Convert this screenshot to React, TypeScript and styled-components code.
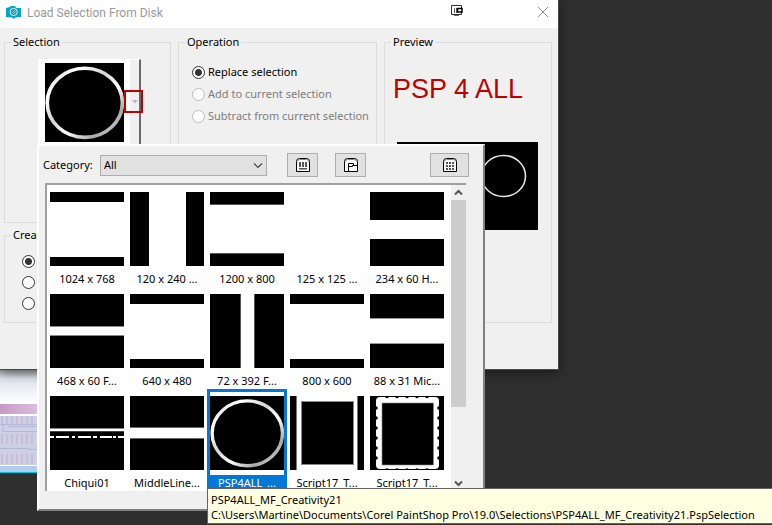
import React from "react";
import styled, { createGlobalStyle } from "styled-components";

const GlobalStyle = createGlobalStyle`
  *, *::before, *::after { box-sizing: border-box; }
  body { margin: 0; background: #2f2f2f; }
  button, select, input, fieldset, legend { font: inherit; margin: 0; }
`;

const titleFont = `Roboto, "Open Sans", sans-serif`;
const uiFont = `"Noto Sans", "Open Sans", sans-serif`;

const Desktop = styled.main`
  position: relative;
  min-height: 100vh;
  overflow: hidden;
  background: #2f2f2f;
  color: #000;
  font: 11px/16px ${uiFont};
`;

const Dialog = styled.section`
  position: relative;
  width: calc(100% - 214px);
  min-width: 520px;
  background: #f0f0f0;
  box-shadow: 0 0 0 1px #484848, 0 3px 12px rgba(0, 0, 0, 0.55);
`;

const TitleBar = styled.header`
  display: flex;
  align-items: center;
  gap: 6px;
  height: 28px;
  padding: 0 9px 4px 6px;
  background: #fff;
`;

const Title = styled.h1`
  flex: 1;
  margin: 0;
  padding-top: 2px;
  color: #999;
  font: 400 12px/16px ${titleFont};
`;

const TitleTool = styled.span`
  display: flex;
  margin: 0 68px 3px 0;
`;

const CloseButton = styled.button`
  display: flex;
  padding: 0;
  border: 0;
  background: none;
`;

const DialogBody = styled.form`
  display: grid;
  grid-template-columns: 167fr 199fr 168fr;
  grid-template-rows: 189px 96px;
  column-gap: 7px;
  row-gap: 4px;
  padding: 6px 6px 46px 4px;
`;

const Group = styled.fieldset<{ $area: string }>`
  grid-area: ${(p) => p.$area};
  min-width: 0;
  padding: 0 13px 0 6px;
  border: 1px solid #dcdcdc;
`;

const GroupTitle = styled.legend`
  padding: 0 2px;
`;

const RadioList = styled.div<{ $inset: number; $gap: number; $top: number }>`
  display: flex;
  flex-direction: column;
  gap: ${(p) => p.$gap}px;
  padding: ${(p) => p.$top}px 0 0 ${(p) => p.$inset}px;
`;

const RadioLabel = styled.label<{ $dim?: boolean }>`
  display: flex;
  align-items: center;
  gap: 3px;
  min-height: 16px;
  white-space: nowrap;
  color: ${(p) => (p.$dim ? "#7d7d7d" : "#000")};
`;

const Radio = styled.input`
  appearance: none;
  flex: none;
  width: 13px;
  height: 13px;
  border: 1px solid #333;
  border-radius: 50%;
  background: #fff;
  &:checked { background: radial-gradient(circle, #333 0 3px, #fff 4px); }
  &:disabled { border-color: #bcbcbc; }
`;

const PickerButton = styled.button`
  display: flex;
  align-items: stretch;
  width: 103px;
  height: 96px;
  margin: 9px 0 0 27px;
  padding: 0;
  border: 1px solid #fff;
  border-right: 2px solid #696969;
  border-bottom: 2px solid #696969;
  background: #f0f0f0;
`;

const PickerImage = styled.span`
  display: flex;
  flex: 1;
  padding: 3px 5px 0 6px;
  background: #fff;
`;

const PickerArrow = styled.span`
  display: flex;
  flex: none;
  align-items: center;
  justify-content: center;
  width: 19px;
  height: 23px;
  margin: 30px -4px 0 -6px;
  padding-left: 2px;
  border: 2px solid #c00000;
  z-index: 1;
`;

const Watermark = styled.p`
  margin: 23px 0 0 2px;
  color: #c00000;
  font: 27px/32px "Liberation Sans", Arial, sans-serif;
  white-space: nowrap;
`;

const PreviewImage = styled.svg`
  display: block;
  width: calc(100% - 6px);
  margin: 37px 0 0 6px;
`;

const Strip = styled.svg`
  display: block;
  width: 38px;
  height: 104px;
`;

const Popup = styled.section`
  position: absolute;
  left: 37px;
  top: 144px;
  width: max-content;
  padding: 7px 17px 18px 6px;
  border: 2px solid;
  border-color: #fff #808080 #808080 #fff;
  background: #f0f0f0;
`;

const Toolbar = styled.div`
  display: flex;
  align-items: center;
  margin: 0 -3px 6px -2px;
`;

const CategoryLabel = styled.label`
  flex: none;
  width: 57px;
`;

const CategoryField = styled.span`
  position: relative;
  display: flex;
  flex: 1;
  margin-right: 20px;
`;

const CategorySelect = styled.select`
  appearance: none;
  width: 100%;
  height: 21px;
  padding: 0 3px;
  border: 1px solid #adadad;
  border-radius: 0;
  background: #e1e1e1;
  color: #000;
`;

const SelectChevron = styled.svg`
  position: absolute;
  right: 4px;
  top: 7px;
  pointer-events: none;
`;

const ToolButton = styled.button<{ $width?: number; $after?: number }>`
  display: flex;
  align-items: center;
  justify-content: center;
  width: ${(p) => p.$width ?? 31}px;
  height: 24px;
  margin-right: ${(p) => p.$after ?? 0}px;
  padding: 0;
  border: 1px solid #adadad;
  background: #e1e1e1;
`;

const ListFrame = styled.div`
  display: flex;
  border: solid #a0a0a0;
  border-width: 2px 0 0 2px;
`;

const ThumbGrid = styled.div`
  display: grid;
  grid-template-columns: repeat(5, 80px);
  padding-right: 4px;
  background: #fff;
`;

const Cell = styled.button<{ $selected?: boolean }>`
  display: flex;
  flex-direction: column;
  padding: 3px 3px 0;
  border: 0;
  background: ${(p) => (p.$selected ? "#0078d7" : "#fff")};
  color: ${(p) => (p.$selected ? "#fff" : "#000")};
`;

const ThumbFrame = styled.span`
  display: flex;
  padding: 4px 0 5px;
  background: #fff;
`;

const Caption = styled.span`
  align-self: center;
  line-height: 16px;
  white-space: nowrap;
`;

const ScrollBar = styled.div`
  display: flex;
  flex-direction: column;
  width: 15px;
  background: #f0f0f0;
`;

const ScrollButton = styled.button`
  display: flex;
  align-items: center;
  justify-content: center;
  height: 15px;
  padding: 0;
  border: 0;
  background: none;
`;

const ScrollTrack = styled.div`
  flex: 1;
`;

const ScrollThumb = styled.div`
  height: 75%;
  background: #cdcdcd;
`;

const Tooltip = styled.div`
  position: absolute;
  left: 207px;
  right: 0;
  top: 488px;
  padding: 3px 3px 1px;
  border: 1px solid #646464;
  border-right: 0;
  background: #ffffe1;
  line-height: 15px;
  white-space: nowrap;
`;

type Bar = [x: number, y: number, w: number, h: number, fill?: string];

const Bars = ({ bars }: { bars: Bar[] }) => (
  <>
    {bars.map(([x, y, w, h, fill = "#000"], i) => (
      <rect key={i} x={x} y={y} width={w} height={h} fill={fill} />
    ))}
  </>
);

const Ring = ({ size }: { size: number }) => (
  <svg width={size} height={size} viewBox="0 0 74 74" aria-hidden="true">
    <defs>
      <linearGradient id={`ring${size}`} x1="0" y1="0" x2="1" y2="1">
        <stop offset="0" stopColor="#bbb" />
        <stop offset="0.2" stopColor="#fff" />
        <stop offset="0.42" stopColor="#d4d4d4" />
        <stop offset="0.6" stopColor="#fff" />
        <stop offset="0.8" stopColor="#aaa" />
        <stop offset="1" stopColor="#ddd" />
      </linearGradient>
    </defs>
    <rect width="74" height="74" />
    <ellipse cx="37.3" cy="37.3" rx="35.2" ry="32.4" fill="none" stroke={`url(#ring${size})`} strokeWidth="3.4" />
  </svg>
);

const dashes: Bar[] = [[0, 4], [6, 13], [22, 3], [28, 13], [43, 4], [50, 12], [63, 3], [68, 6]].map(
  ([x, w]): Bar => [x, 40, w, 2, "#fff"]
);

const horizontal = (top: number, bottom: number, edge: string): Bar[] => [
  [0, 0, 74, top],
  [0, top, 74, 1, edge],
  [0, bottom - 1, 74, 1, edge],
  [0, bottom, 74, 74 - bottom],
];

const Stamp = () => (
  <>
    <rect width="74" height="74" />
    <rect x="6" y="1" width="63" height="72" rx="4" fill="#fff" />
    {[17, 27, 37, 47, 57].map((t) => (
      <React.Fragment key={t}>
        <circle cx={t} cy="0.5" r="1.8" />
        <circle cx={t} cy="74" r="1.8" />
      </React.Fragment>
    ))}
    {[12, 22, 32, 42, 52, 62].map((t) => (
      <React.Fragment key={t}>
        <circle cx="6" cy={t} r="1.8" />
        <circle cx="69" cy={t} r="1.8" />
      </React.Fragment>
    ))}
    <rect x="12" y="7" width="51.5" height="62" stroke="#888" strokeWidth="0.6" />
  </>
);

const items: { name: string; bars?: Bar[]; art?: "ring" | "stamp" }[] = [
  { name: "1024 x 768", bars: [[0, 0, 74, 10], [0, 65, 74, 9]] },
  { name: "120 x 240 ...", bars: [[0, 0, 19, 74], [56, 0, 18, 74]] },
  { name: "1200 x 800", bars: horizontal(12, 62, "#555") },
  { name: "125 x 125 ...", bars: [] },
  { name: "234 x 60 H...", bars: [[0, 0, 74, 28], [0, 47, 74, 27]] },
  { name: "468 x 60 F...", bars: horizontal(32, 42, "#888") },
  { name: "640 x 480", bars: [[0, 0, 74, 10], [0, 65, 74, 9]] },
  { name: "72 x 392 F...", bars: [[0, 0, 30, 74], [30, 0, 1, 74, "#555"], [44, 0, 1, 74, "#555"], [45, 0, 29, 74]] },
  { name: "800 x 600", bars: [[0, 0, 74, 10], [0, 65, 74, 9]] },
  { name: "88 x 31 Mic...", bars: horizontal(24, 50, "#999") },
  { name: "Chiqui01", bars: [[0, 0, 74, 32], [0, 32, 74, 1, "#888"], [0, 35, 74, 39], [0, 35, 74, 1, "#444"], ...dashes] },
  { name: "MiddleLine...", bars: horizontal(31, 43, "#666") },
  { name: "PSP4ALL_...", art: "ring" },
  {
    name: "Script17_T...",
    bars: [[0, 0, 6, 74], [6, 0, 1, 74, "#777"], [67, 0, 1, 74, "#777"], [68, 0, 6, 74], [11, 5, 53, 64, "#888"], [12, 6, 51, 62]],
  },
  { name: "Script17_T...", art: "stamp" },
];

const ToolIcon = ({ kind }: { kind: "delete" | "save" | "grid" }) => (
  <svg width="14" height="14" viewBox="0 0 14 14" fill="none" aria-hidden="true">
    <path d="M0.5 13.5V3.5Q0.5 0.5 3.5 0.5H10.5Q13.5 0.5 13.5 3.5V13.5Z" fill="#f8f8f8" stroke="#000" />
    <path d="M1.5 3.5Q1.5 1.5 3.5 1.5H10.5Q12.5 1.5 12.5 3.5" stroke="#888" />
    {kind === "delete" && <path d="M4 4V9M7 4V9M10 4V9M3 10.5H11" stroke="#555" strokeWidth="2" />}
    {kind === "delete" && <path d="M3 9.5H11" stroke="#f8f8f8" />}
    {kind === "save" && <path d="M4.5 13V5.5H9.5V7.5H13M4.5 8.5H8.5V7.5H10" stroke="#000" />}
    {kind === "grid" && (
      <path
        d="M3 5H5M6 5H8M9 5H11M3 8H5M6 8H8M9 8H11M3 11H5M6 11H8M9 11H11"
        stroke="#555"
        strokeWidth="2"
      />
    )}
  </svg>
);

const ScrollChevron = ({ down }: { down?: boolean }) => (
  <svg width="9" height="7" viewBox="0 0 9 7" fill="none" aria-hidden="true">
    <path d={down ? "M1 1.5L4.5 5L8 1.5" : "M1 5.5L4.5 2L8 5.5"} stroke="#555" strokeWidth="2" />
  </svg>
);

export default function App() {
  return (
    <Desktop>
      <GlobalStyle />
      <Dialog aria-labelledby="dialog-title">
        <TitleBar>
          <svg width="15" height="13" viewBox="0 0 15 13" aria-hidden="true">
            <path d="M0 2L4 1L5 0H9L10 2H15V11H10L8 13L6 11.5L0 11Z" fill="#00a6c4" />
            <circle cx="7.7" cy="6" r="3.6" fill="#2391aa" stroke="#d8f2f6" strokeWidth="1" />
            <path d="M6 7L9 4M7 8L10 5.5" stroke="#8fd4e0" />
          </svg>
          <Title id="dialog-title">Load Selection From Disk</Title>
          <TitleTool>
            <svg width="12" height="12" viewBox="0 0 12 12" fill="none" aria-hidden="true">
              <path d="M0.5 0.5H10.5V9.5H0.5Z" stroke="#333" />
              <path d="M3.5 3V8M5.5 3V8M3 10.5H8" stroke="#666" />
              <path d="M6.5 3.5H11V7H6.5Z" fill="#fff" stroke="#000" strokeWidth="1.5" />
            </svg>
          </TitleTool>
          <CloseButton type="button" aria-label="Close">
            <svg width="12" height="12" viewBox="0 0 12 12" aria-hidden="true">
              <path d="M1 1L11 11M11 1L1 11" stroke="#888" />
            </svg>
          </CloseButton>
        </TitleBar>
        <DialogBody>
          <Group $area="1 / 1">
            <GroupTitle>Selection</GroupTitle>
            <PickerButton type="button" aria-label="Choose selection">
              <PickerImage>
                <Ring size={79} />
              </PickerImage>
              <PickerArrow>
                <svg width="6" height="4" viewBox="0 0 6 4" aria-hidden="true">
                  <path d="M0 0H6L3 3.5Z" fill="#bbb" />
                </svg>
              </PickerArrow>
            </PickerButton>
          </Group>
          <Group $area="1 / 2 / 3 / 3">
            <GroupTitle>Operation</GroupTitle>
            <RadioList $inset={7} $gap={6} $top={14}>
              <RadioLabel>
                <Radio type="radio" name="operation" defaultChecked /> Replace selection
              </RadioLabel>
              <RadioLabel $dim>
                <Radio type="radio" name="operation" disabled /> Add to current selection
              </RadioLabel>
              <RadioLabel $dim>
                <Radio type="radio" name="operation" disabled /> Subtract from current selection
              </RadioLabel>
            </RadioList>
          </Group>
          <Group $area="2 / 1">
            <GroupTitle>Create</GroupTitle>
            <RadioList $inset={11} $gap={5} $top={10}>
              {["First source", "Second source", "Third source"].map((name, i) => (
                <RadioLabel key={name}>
                  <Radio type="radio" name="source" aria-label={name} defaultChecked={i === 0} />
                </RadioLabel>
              ))}
            </RadioList>
          </Group>
          <Group $area="1 / 3 / 3 / 4">
            <GroupTitle>Preview</GroupTitle>
            <Watermark>PSP 4 ALL</Watermark>
            <PreviewImage viewBox="0 0 141 88" role="img" aria-label="Selection preview">
              <rect width="141" height="88" />
              <ellipse cx="106.5" cy="34" rx="22" ry="20.5" fill="none" stroke="#e4e4e4" strokeWidth="1.6" />
            </PreviewImage>
          </Group>
        </DialogBody>
      </Dialog>

      <Strip viewBox="0 0 38 104" aria-hidden="true">
        <defs>
          <linearGradient id="sky" x1="0" y1="0" x2="0" y2="1">
            <stop offset="0" stopColor="#a2a5a9" />
            <stop offset="0.3" stopColor="#dfe6ee" />
            <stop offset="1" stopColor="#fafcfe" />
          </linearGradient>
          <linearGradient id="rose">
            <stop offset="0" stopColor="#c69ac6" />
            <stop offset="1" stopColor="#dcbfdc" />
          </linearGradient>
        </defs>
        <rect width="38" height="104" fill="#fff" />
        <rect width="38" height="32" fill="url(#sky)" />
        <rect y="35" width="38" height="10" fill="url(#rose)" />
        <rect y="47" width="38" height="49" fill="#cbd0e6" />
        <path
          d="M2 47V55M7 47V55M12 47V55M17 47V55M22 47V55M27 47V55M32 47V55M2 65V75M7 65V75M12 65V75M17 65V75M22 65V75M27 65V75M32 65V75M2 85V95M7 85V95M12 85V95M17 85V95M22 85V95M27 85V95M32 85V95"
          stroke="#cba9c6"
        />
        <path d="M0 55.5H38M8 57.5H38M3 56V62.5H38M0 79.5H28L30 80.5H38" stroke="#b2b9d6" fill="none" />
        <rect y="97" width="38" height="6" fill="#b4cdea" />
        <rect y="103" width="38" height="1" fill="#00c5dd" />
      </Strip>

      <Popup aria-label="Selections">
        <Toolbar>
          <CategoryLabel htmlFor="category">Category:</CategoryLabel>
          <CategoryField>
            <CategorySelect id="category" defaultValue="All">
              <option>All</option>
            </CategorySelect>
            <SelectChevron width="10" height="7" viewBox="0 0 10 7" fill="none" aria-hidden="true">
              <path d="M1 1.5L5 5.5L9 1.5" stroke="#444" strokeWidth="1.2" />
            </SelectChevron>
          </CategoryField>
          <ToolButton type="button" aria-label="Delete" $after={17}>
            <ToolIcon kind="delete" />
          </ToolButton>
          <ToolButton type="button" aria-label="File locations" $after={64}>
            <ToolIcon kind="save" />
          </ToolButton>
          <ToolButton type="button" aria-label="Resource manager" $width={39}>
            <ToolIcon kind="grid" />
          </ToolButton>
        </Toolbar>
        <ListFrame>
          <ThumbGrid>
            {items.map(({ name, bars, art }, i) => (
              <Cell key={i} type="button" $selected={art === "ring"} aria-pressed={art === "ring"}>
                <ThumbFrame>
                  {art === "ring" ? (
                    <Ring size={74} />
                  ) : (
                    <svg width="74" height="74" viewBox="0 0 74 74" aria-hidden="true">
                      {art === "stamp" ? <Stamp /> : <Bars bars={bars ?? []} />}
                    </svg>
                  )}
                </ThumbFrame>
                <Caption>{name}</Caption>
              </Cell>
            ))}
          </ThumbGrid>
          <ScrollBar>
            <ScrollButton type="button" aria-label="Scroll up">
              <ScrollChevron />
            </ScrollButton>
            <ScrollTrack>
              <ScrollThumb />
            </ScrollTrack>
            <ScrollButton type="button" aria-label="Scroll down">
              <ScrollChevron down />
            </ScrollButton>
          </ScrollBar>
        </ListFrame>
      </Popup>

      <Tooltip role="tooltip">
        PSP4ALL_MF_Creativity21
        <br />
        {"C:\\Users\\Martine\\Documents\\Corel PaintShop Pro\\19.0\\Selections\\PSP4ALL_MF_Creativity21.PspSelection"}
      </Tooltip>
    </Desktop>
  );
}
